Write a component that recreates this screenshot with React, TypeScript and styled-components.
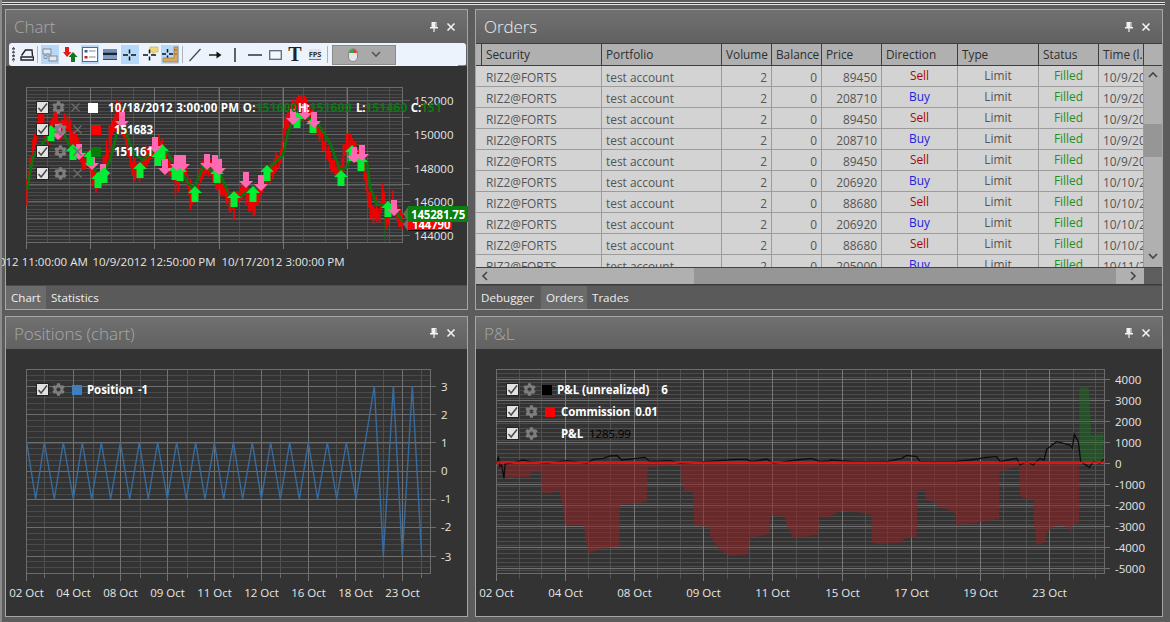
import React from "react";
import styled, { createGlobalStyle } from "styled-components";
import { FaCog } from "react-icons/fa";

const UI = '"Open Sans", "Noto Sans", sans-serif';

const Global = createGlobalStyle`
  html, body { margin: 0; padding: 0; background: #5c5c5c; overflow: hidden; }
  * { box-sizing: border-box; }
`;

const Win = styled.div`
  width: 1170px; height: 622px; overflow: hidden; background: #5c5c5c;
  padding: 2px 5px 0 0; font-family: ${UI}; display: flex; flex-direction: column;
  border-left: 2px solid #8c8c8c;
`;
const TopRule = styled.div`
  height: 3px; margin: 0 0 4px 0; flex: none;
  border-top: 1px solid #e4e4e4; border-bottom: 1px solid #e4e4e4; background: #3a3a3a;
`;
const PanelGrid = styled.div`
  display: grid; grid-template-columns: 463px 688px; grid-template-rows: 301px 301px;
  column-gap: 7px; row-gap: 6px; margin-left: 3px;
`;
const Panel = styled.section`
  border: 1px solid #a6a6a6; background: #333; display: flex; flex-direction: column; overflow: visible; min-width: 0;
`;
const Header = styled.header<{ $h: number }>`
  height: ${(p) => p.$h}px; flex: none; display: flex; align-items: center; justify-content: space-between;
  padding: 0 11px 0 8px; background: linear-gradient(#707070, #616161);
`;
const Title = styled.h2<{ $on?: boolean }>`
  margin: 0; font-size: 17px; font-weight: 300; line-height: 1; letter-spacing: -0.1px; color: ${(p) => (p.$on ? "#ececec" : "#a8a8a8")};
`;
const HeadIcons = styled.div`display: flex; align-items: center; gap: 7px;`;
const Body = styled.div`flex: 1; position: relative; min-height: 0; background: #333;`;
const TabBar = styled.nav`
  height: 24px; flex: none; display: flex; background: #5a5a5a; border-top: 1px solid #4a4a4a;
`;
const Tab = styled.div<{ $on?: boolean; $w: number }>`
  width: ${(p) => p.$w}px; display: flex; align-items: center; padding-left: 5px; font-size: 11.6px; color: #eee;
  background: ${(p) => (p.$on ? "#6b6b6b" : "transparent")};
`;

/* toolbar */
const ToolWrap = styled.div`height: 23px; flex: none; background: #616161; padding: 0 1px 0 3px;`;
const Toolbar = styled.div`
  height: 23px; background: #edf3fc; border-radius: 3px; display: flex; align-items: center; gap: 2px; padding-left: 3px; position: relative;
`;
const Grip = styled.div`
  width: 3px; height: 15px; margin-right: 1px;
  background: radial-gradient(circle at 1.5px 1.5px, #555 1.2px, transparent 1.4px) 0 0 / 3px 3.6px;
`;
const ToolBtn = styled.div<{ $on?: boolean; $w?: number }>`
  width: ${(p) => p.$w ?? 18}px; height: 19px; display: flex; align-items: center; justify-content: center;
  background: ${(p) => (p.$on ? "#b6d8f9" : "transparent")};
`;
const Sep = styled.div`width: 1px; height: 17px; background: #a9b4c2; margin: 0 1px 0 0;`;
const SepB = styled(Sep)`margin: 0 1px;`;
const SerifT = styled.span`font-family: "Liberation Serif", serif; font-weight: 700; font-size: 20px; line-height: 19px; color: #222;`;
const Fps = styled.span`font-size: 7.5px; font-weight: 700; color: #333; background: #dfe3e8; line-height: 10px; letter-spacing: -0.2px; border-bottom: 1px solid #777;`;
const MouseDrop = styled.div`
  width: 64px; height: 20px; margin-left: 1px; background: #a9a9a9; border: 1px solid #8a8a8a; display: flex; align-items: center; padding: 0 14px 0 15px; justify-content: space-between;
`;
const Overflow = styled.div`position: absolute; right: 0px; bottom: 1px; width: 9px; height: 9px;`;

/* legend */
const Legend = styled.div<{ $x: number; $y: number }>`
  position: absolute; left: ${(p) => p.$x}px; top: ${(p) => p.$y}px; display: flex; flex-direction: column; gap: 9px;
`;
const LegendRow = styled.div`display: flex; align-items: center; height: 13px; white-space: nowrap;`;
const Check = styled.span`
  width: 13px; height: 13px; background: #e2e2e2; border: 1px solid #222; display: flex; align-items: center; justify-content: center; flex: none;
`;
const Gear = styled.span<{ $ml: number }>`
  margin-left: ${(p) => p.$ml}px; width: 13px; height: 13px; color: #7e7e7e; display: flex; flex: none;
`;
const Cross = styled.span<{ $ml: number }>`margin-left: ${(p) => p.$ml}px; width: 11px; height: 11px; display: flex; flex: none;`;
const Swatch = styled.span<{ $c: string; $ml: number }>`
  margin-left: ${(p) => p.$ml}px; width: 10px; height: 10px; background: ${(p) => p.$c}; flex: none;
`;
const LName = styled.span<{ $ml: number }>`
  margin-left: ${(p) => p.$ml}px; font-size: 11.5px; font-weight: 700; color: #fff; letter-spacing: -0.1px;
`;
const DateName = styled(LName)`letter-spacing: 0.28px;`;
const LVal = styled.span<{ $c?: string; $ml?: number }>`
  margin-left: ${(p) => p.$ml ?? 0}px; font-size: 11.5px; font-weight: ${(p) => (p.$c === "#000" ? 400 : 700)}; color: ${(p) => p.$c ?? "#fff"}; letter-spacing: -0.1px;
`;
const BarVal = styled(LVal)`letter-spacing: 0.45px;`;

/* svg */
const ChartSvg = styled.svg`display: block; overflow: visible; position: relative;`;
const ChevSvg = styled.svg`position: relative; display: block;`;
const AxisText = styled.text`font-family: ${UI}; font-size: 11.5px; fill: #e6e6e6;`;
const PriceTag = styled.text`font-family: ${UI}; font-size: 11.5px; font-weight: 700; fill: #fff; letter-spacing: -0.2px;`;

/* orders grid */
const GridFrame = styled.div`flex: 1; min-height: 0; display: flex; flex-direction: column; background: #d3d3d3; border-bottom: 1px solid #3c3c3c;`;
const GridTop = styled.div`flex: 1; min-height: 0; display: flex;`;
const GridMain = styled.div`width: 668px; display: flex; flex-direction: column; min-height: 0;`;
const HeadRow = styled.div`height: 23px; flex: none; display: flex; background: #b0b0b0; border-top: 1px solid #3e3e3e; border-bottom: 1px solid #3e3e3e;`;
const HeadCell = styled.div<{ $w: number }>`
  width: ${(p) => p.$w}px; flex: none; border-right: 1px solid #3e3e3e; padding-left: 4px; font-size: 11.8px; color: #2e2e2e;
  line-height: 21px; overflow: hidden; white-space: nowrap;
`;
const Rows = styled.div`flex: 1; min-height: 0; overflow: hidden;`;
const Row = styled.div`height: 21px; display: flex; border-bottom: 1px solid #9c9c9c;`;
const Cell = styled.div<{ $w: number; $align?: string; $up?: boolean; $c?: string }>`
  width: ${(p) => p.$w}px; flex: none; border-right: 1px solid #9c9c9c; font-size: 11.9px; padding: 0 4px;
  line-height: ${(p) => (p.$up ? 18 : 22)}px; text-align: ${(p) => p.$align ?? "left"}; color: ${(p) => p.$c ?? "#555"};
  overflow: hidden; white-space: nowrap;
`;
const Stub = styled.div`width: 6px; flex: none;`;
const HStub = styled.div`width: 6px; flex: none; border-right: 1px solid #3e3e3e;`;
const VBar = styled.div`width: 18px; flex: none; display: flex; flex-direction: column; background: #b0b0b0; border-top: 1px solid #3e3e3e;`;
const VHead = styled.div`height: 22px; flex: none; border-bottom: 1px solid #3e3e3e;`;
const VTrack = styled.div`flex: 1; position: relative; display: flex; flex-direction: column; justify-content: space-between; align-items: center; padding: 5px 0;`;
const VThumb = styled.div`position: absolute; left: 0; right: 0; top: 58px; height: 33px; background: #969696;`;
const HBar = styled.div`height: 17px; flex: none; display: flex; background: #5e5e5e; border-top: 1px solid #444;`;
const HTrack = styled.div`width: 668px; position: relative; background: #b0b0b0; display: flex; align-items: center; justify-content: space-between; padding: 0 5px;`;
const HThumb = styled.div`position: absolute; left: 218px; width: 422px; top: 0; bottom: 0; background: #969696;`;

/* icons */
const Pin = () => (
  <svg width="10" height="12" viewBox="0 0 10 12"><path d="M2.5 1h5v5h1.5v1.5H5.6V11H4.4V7.5H1V6h1.5z" fill="#f2f2f2" /><path d="M6 1.8h.7v4H6z" fill="#999" /></svg>
);
const Close = () => (
  <svg width="10" height="10" viewBox="0 0 10 10"><path d="M1.5 1.5l7 7M8.5 1.5l-7 7" stroke="#f2f2f2" strokeWidth="1.6" /></svg>
);
const Tick = () => (
  <svg width="11" height="11" viewBox="0 0 11 11"><path d="M1.5 6l2.6 3L10 1.5" fill="none" stroke="#4a4a4a" strokeWidth="1.5" /></svg>
);
const CrossIcon = () => (
  <svg width="11" height="11" viewBox="0 0 11 11"><path d="M1.5 1.5l8 8M9.5 1.5l-8 8" stroke="#6e6e6e" strokeWidth="1.2" /></svg>
);
const Cross16 = ({ extra }: { extra?: React.ReactNode }) => (
  <svg width="18" height="17" viewBox="0 0 18 17">
    {extra}
    <path d="M2 9h5M10 9h5M8.5 3.5v4M8.5 10.5v4" stroke="#111" strokeWidth="1.5" />
  </svg>
);
const IconTray = () => (
  <svg width="14" height="13" viewBox="0 0 14 13"><path d="M1.5 7.5L5.5 2h6.5l.5 6M1 9h12.5v3H1z" fill="none" stroke="#222" strokeWidth="1.4" /></svg>
);
const IconChart = () => (
  <svg width="16" height="14" viewBox="0 0 16 14"><rect x="1" y="1" width="8" height="5" fill="#e4e9ef" stroke="#7c8a99" /><rect x="7" y="8" width="8" height="5" fill="#e4e9ef" stroke="#7c8a99" /><path d="M5 6l5 2M2 7.5h3v3H2z" fill="none" stroke="#8b98a6" /></svg>
);
const IconArrows = () => (
  <svg width="15" height="16" viewBox="0 0 15 16"><path d="M2 0h4v5h2.5L4 10 0 5h2z" fill="#e01b1b" /><path d="M10 5l4.5 5H12v5H8v-5H5.5z" fill="#0e7a1c" /></svg>
);
const IconLegend = () => (
  <svg width="16" height="15" viewBox="0 0 16 15"><rect x=".5" y=".5" width="15" height="14" fill="#fff" stroke="#5c6a78" /><rect x="2.5" y="3" width="3" height="2.5" fill="#2d62a8" /><path d="M7 4h6.5" stroke="#7a8796" /><rect x="2.5" y="9" width="3" height="2.5" fill="#c42020" /><path d="M7 10h6.5" stroke="#7a8796" /></svg>
);
const IconBand = () => (
  <svg width="14" height="12" viewBox="0 0 14 12"><rect x="0" y="0" width="14" height="3.5" fill="#6a8fb8" /><rect x="0" y="3.5" width="14" height="3" fill="#1b2230" /><rect x="0" y="6.5" width="14" height="3.5" fill="#7e9ec4" /><rect y="10" width="14" height="1" fill="#33445a" /></svg>
);
const IconCorner = () => (
  <svg width="18" height="17" viewBox="0 0 18 17">
    <path d="M13 1h4v15H2v-4h11z" fill="#d9a860" stroke="#8d6a30" strokeWidth=".6" />
    <path d="M1 8h4M8 8h4M6.5 3v3.5M6.5 9.5v2" stroke="#111" strokeWidth="1.5" />
    <path d="M13 4h3M13 8h3" stroke="#8d6a30" />
  </svg>
);
const IconLine = () => (
  <svg width="14" height="14" viewBox="0 0 14 14"><path d="M1.5 13L12.5 1" stroke="#444" strokeWidth="1.2" /></svg>
);
const IconArrow = () => (
  <svg width="13" height="8" viewBox="0 0 13 8"><path d="M0 4h8" stroke="#111" strokeWidth="1.4" /><path d="M7.5 .5L12.5 4l-5 3.5z" fill="#111" /></svg>
);
const IconV = () => <svg width="2" height="14" viewBox="0 0 2 14"><path d="M1 0v14" stroke="#222" strokeWidth="1.4" /></svg>;
const IconH = () => <svg width="14" height="2" viewBox="0 0 14 2"><path d="M0 1h14" stroke="#222" strokeWidth="1.4" /></svg>;
const IconRect = () => <svg width="13" height="10" viewBox="0 0 13 10"><rect x=".7" y=".7" width="11.6" height="8.6" fill="#f4f7fb" stroke="#5a6a7c" strokeWidth="1.3" /></svg>;
const IconMouse = () => (
  <svg width="10" height="14" viewBox="0 0 10 14"><rect x=".5" y=".5" width="9" height="13" rx="4.5" fill="#e6e6e6" stroke="#8a8a8a" /><path d="M1 5a4 4 0 0 1 4-4v4z" fill="#3aa35a" /><path d="M9 5a4 4 0 0 0-4-4v4z" fill="#d8433a" /></svg>
);
const Chev = ({ d, c = "#444" }: { d: "up" | "down" | "left" | "right"; c?: string }) => {
  const p = { up: "M1 6l4-4 4 4", down: "M1 2l4 4 4-4", left: "M6 1L2 5l4 4", right: "M2 1l4 4-4 4" }[d];
  return <ChevSvg width="10" height="10" viewBox="0 0 10 10"><path d={p} fill="none" stroke={c} strokeWidth="1.6" /></ChevSvg>;
};

/* data helpers */
const range = (a: number, b: number, step: number) => {
  const r: number[] = [];
  for (let v = a; v <= b + 0.001; v += step) r.push(v);
  return r;
};
const poly = (pts: number[][]) => pts.map((p) => `${p[0]},${p[1]}`).join(" ");
const interp = (pts: number[][], x: number) => {
  for (let i = 1; i < pts.length; i++) {
    if (x <= pts[i][0]) {
      const [x0, y0] = pts[i - 1];
      const [x1, y1] = pts[i];
      return y0 + ((y1 - y0) * (x - x0)) / (x1 - x0);
    }
  }
  return pts[pts.length - 1][1];
};

const priceRed = [[27,190],[30,165],[33,150],[36,135],[40,116],[44,125],[48,140],[52,122],[56,118],[60,130],[64,128],[68,125],[72,140],[76,135],[80,150],[84,166],[88,155],[92,170],[96,185],[100,178],[104,165],[108,150],[112,130],[116,118],[120,112],[124,130],[128,150],[132,165],[136,170],[140,172],[144,160],[150,150],[156,148],[162,145],[166,160],[170,170],[175,180],[180,175],[186,172],[190,190],[195,200],[200,175],[204,165],[208,165],[212,170],[218,185],[225,190],[230,205],[236,200],[242,190],[248,197],[254,205],[260,190],[265,180],[270,172],[276,162],[280,157],[285,123],[292,110],[300,102],[310,115],[320,133],[323,143],[333,167],[340,173],[347,140],[355,150],[363,160],[368,193],[373,213],[380,213],[383,193],[387,223],[393,200],[400,220],[403,224]];
const priceSma = [[27,190],[33,157],[50,133],[63,133],[72,150],[87,153],[100,180],[110,160],[117,133],[123,123],[133,153],[143,160],[157,147],[167,153],[180,170],[193,190],[203,167],[220,173],[230,197],[240,197],[250,190],[263,183],[270,167],[283,155],[288,133],[293,120],[303,113],[320,127],[330,143],[340,170],[347,167],[353,153],[367,162],[370,187],[377,205],[387,205],[397,213],[403,222]];
let seed = 12345;
const rnd = () => { seed = (seed * 1103515245 + 12345) & 0x7fffffff; return seed / 0x7fffffff; };
const candles = range(27, 403, 1.5).map((x) => {
  const c = interp(priceRed, x) + (rnd() - 0.5) * 6;
  const up = 3 + rnd() * 7;
  const down = 3 + rnd() * 8;
  return { x, a: c - up, b: c + down, wick: rnd() > 0.93 ? 7 : 0 };
});
const upArrows = [[51,133],[73,152],[90,158],[98,180],[104,175],[140,170],[158,158],[162,152],[175,172],[180,173],[195,194],[217,175],[234,199],[253,194],[267,173],[297,120],[313,125],[341,178],[352,153],[361,163],[388,209]];
const downArrows = [[58,132],[79,152],[92,162],[103,172],[122,120],[155,145],[165,167],[177,163],[183,163],[207,162],[215,163],[219,167],[246,180],[261,183],[293,117],[305,112],[314,120],[354,155],[362,153],[394,208]];
const upPts = (x: number, y: number) => `${x},${y-8} ${x+7},${y-1} ${x+3.5},${y-1} ${x+3.5},${y+8} ${x-3.5},${y+8} ${x-3.5},${y-1} ${x-7},${y-1}`;
const downPts = (x: number, y: number) => `${x},${y+8} ${x+7},${y+1} ${x+3},${y+1} ${x+3},${y-8} ${x-3},${y-8} ${x-3},${y+1} ${x-7},${y+1}`;

const PriceChart = () => {
  const major = [26.5, 90.5, 154.5, 219.5, 283.5, 347.5];
  const minor = range(26.5, 402, 21.33);
  const h200 = range(87, 242, 3.38);
  const h1000 = [100.5,117.5,134.5,151,168,184.5,201.5,218.5,235.5];
  return (
    <ChartSvg width="461" height="219" viewBox="6 66 461 219">
      {h200.map((y) => <line key={y} x1={26.5} x2={402.5} y1={Math.round(y)+.5} y2={Math.round(y)+.5} stroke="#4b4b4b" shapeRendering="crispEdges" />)}
      {minor.map((x) => <line key={x} x1={x} x2={x} y1={87} y2={242} stroke="#4f4f4f" shapeRendering="crispEdges" />)}
      {h1000.map((y) => <line key={y} x1={26.5} x2={410} y1={y} y2={y} stroke="#646464" shapeRendering="crispEdges" />)}
      {major.map((x) => <line key={x} x1={x} x2={x} y1={87} y2={249} stroke="#747474" shapeRendering="crispEdges" />)}
      <rect x="26.5" y="87.5" width="376" height="155" fill="none" stroke="#6c6c6c" shapeRendering="crispEdges" />
      {candles.map((c) => <line key={c.x} x1={c.x} x2={c.x} y1={c.a - c.wick} y2={c.b + c.wick} stroke="#f50000" strokeWidth="1.7" />)}
      <polyline points={poly(priceSma)} fill="none" stroke="#0a740f" strokeWidth="2.6" />
      <line x1="385" x2="385" y1="205" y2="242" stroke="#0a740f" />
      {downArrows.slice(0, 4).map(([x, y]) => <polygon key={x} points={downPts(x, y)} fill="#ff69b4" />)}
      {upArrows.map(([x, y]) => <polygon key={x} points={upPts(x, y)} fill="#00ee33" />)}
      {downArrows.slice(4).map(([x, y]) => <polygon key={x} points={downPts(x, y)} fill="#ff69b4" />)}
      {[[152000,100.5],[150000,134.5],[148000,168],[146000,201.5],[144000,235.5]].map(([v, y]) => <AxisText key={v} x="414" y={y + 4.5}>{v}</AxisText>)}
      <AxisText x="26" y="266" textAnchor="middle">10/1/2012 11:00:00 AM</AxisText>
      <AxisText x="154" y="266" textAnchor="middle">10/9/2012 12:50:00 PM</AxisText>
      <AxisText x="283" y="266" textAnchor="middle">10/17/2012 3:00:00 PM</AxisText>
      <polygon points="403,224 408,218 408,231" fill="#6a6a6a" />
      <rect x="408" y="218" width="44" height="12" fill="#ff0000" />
      <line x1="408" x2="452" y1="230.5" y2="230.5" stroke="#111" />
      <PriceTag x="412" y="228.5">144790</PriceTag>
      <polygon points="403,214 408,207 408,221" fill="#4e7a4e" />
      <rect x="408" y="206" width="60" height="16" fill="#0a8010" />
      <PriceTag x="411" y="218.5">145281.75</PriceTag>
    </ChartSvg>
  );
};

const zig = (() => {
  const peaks = [80,133,190,247,304,361,418,473,530,587,643,700,757,812,869,925,982,1039];
  const troughs = [107,163,220,275,332,389,445,502,559,615,671,728,784,841,898,953,1010,1068];
  const pts: number[][] = [];
  peaks.forEach((p, i) => { pts.push([p / 3, 442.5]); pts.push([troughs[i] / 3, 499]); });
  [[1123,386],[1150,556],[1180,386],[1207,556],[1237,386],[1265,556]].forEach(([x, y]) => pts.push([x / 3, y]));
  return pts;
})();

const PositionsChart = () => {
  const ys = [386.5,414.5,442.5,471,499,527,556.5];
  const vals = [3,2,1,0,-1,-2,-3];
  const major = [26.5,73.5,120.5,167.5,214.5,261.5,308.5,355.5,402.5];
  const minor = [44.5,93.5,140.5,187,233.5,280.5,336.5,383.5,421.5];
  const labels = ["02 Oct","04 Oct","08 Oct","09 Oct","11 Oct","12 Oct","16 Oct","18 Oct","23 Oct"];
  const fine = range(369, 573, 5.66);
  return (
    <ChartSvg width="461" height="267" viewBox="6 349 461 267">
      {fine.map((y) => <line key={y} x1={26.5} x2={430.5} y1={Math.round(y)+.5} y2={Math.round(y)+.5} stroke="#4a4a4a" shapeRendering="crispEdges" />)}
      {minor.map((x) => <line key={x} x1={x} x2={x} y1={369} y2={573} stroke="#505050" shapeRendering="crispEdges" />)}
      {minor.map((x) => <line key={x} x1={x} x2={x} y1={573} y2={578} stroke="#6c6c6c" shapeRendering="crispEdges" />)}
      {major.map((x) => <line key={x} x1={x} x2={x} y1={369} y2={581} stroke="#727272" shapeRendering="crispEdges" />)}
      {ys.map((y) => <line key={y} x1={26.5} x2={436} y1={y} y2={y} stroke="#6e6e6e" shapeRendering="crispEdges" />)}
      <rect x="26.5" y="369.5" width="404" height="204" fill="none" stroke="#6c6c6c" shapeRendering="crispEdges" />
      <polyline points={poly(zig)} fill="none" stroke="#386c9e" strokeWidth="1.4" />
      {ys.map((y, i) => <AxisText key={y} x="441" y={y + 4}>{vals[i]}</AxisText>)}
      {labels.map((l, i) => <AxisText key={l} x={major[i]} y="597" textAnchor="middle">{l}</AxisText>)}
    </ChartSvg>
  );
};

const z7 = (pts: number[][]) => pts.map(([x, y]) => [x / 3 + 480, y / 3 + 360]);
const z8 = (pts: number[][]) => pts.map(([x, y]) => [x / 3 + 820, y / 3 + 360]);
const lossArea = [
  ...z7([[49,308],[75,355],[150,350],[155,335],[183,335],[185,398],[215,400],[237,390],[247,430],[255,495],[310,495],[325,580],[370,565],[418,560],[420,435],[500,425],[503,323],[575,315],[600,315],[603,348],[612,395],[638,397],[642,497],[688,500],[690,530],[720,570],[750,588],[805,583],[808,533],[868,523],[872,467],[915,470],[918,490],[940,535],[1015,525],[1017,472],[1050,470]]),
  ...z8([[60,452],[125,458],[153,465],[155,548],[175,552],[245,548],[255,533],[290,533],[293,392],[315,390],[318,422],[350,425],[352,443],[380,447],[405,460],[408,495],[470,488],[530,478],[537,478],[539,337],[570,325],[597,322],[600,405],[608,415],[640,418],[642,490],[650,555],[675,548],[680,515],[710,495],[740,500],[755,515],[760,490],[777,490],[778,308]]),
];
const gainArea = z8([[778,308],[778,82],[806,82],[814,225],[850,220],[850,300],[851,308]]);
const pnlLine = [
  ...z7([[50,310],[55,290],[60,320],[65,315],[72,355],[75,312],[100,308],[130,300],[150,305],[200,310],[260,302],[320,310],[340,298],[370,295],[390,288],[412,287],[425,300],[470,295],[495,292],[510,305],[570,302],[600,310],[770,298],[800,298],[815,305],[860,297],[880,310],[950,300],[995,295],[1020,305],[1050,303]]),
  ...z8([[30,300],[100,305],[200,305],[245,295],[260,286],[290,290],[300,305],[400,305],[450,300],[500,292],[530,290],[540,305],[590,295],[600,315],[620,305],[640,315],[660,295],[672,300],[680,268],[710,245],[750,255],[757,265],[763,222],[775,245],[782,305],[808,322],[820,305],[840,310],[850,298]]),
];

const PnlChart = () => {
  const major = [496.5,565.5,634.5,703.5,772.5,842.5,911.5,980.5,1049.5];
  const minor = [519.5,541.5,588.5,610.5,657.5,680.5,727.5,749.5,796.5,818.5,865.5,887.5,934.5,956.5,1003.5,1026.5,1073.5,1095.5];
  const dates = ["02 Oct","04 Oct","08 Oct","09 Oct","11 Oct","15 Oct","17 Oct","19 Oct","23 Oct"];
  const vals = [4000,3000,2000,1000,0,-1000,-2000,-3000,-4000,-5000];
  const y0 = 462.5;
  const fine = range(369, 573, 4.19);
  return (
    <ChartSvg width="686" height="267" viewBox="476 349 686 267">
      {fine.map((y) => <line key={y} x1={496.5} x2={1104.5} y1={Math.round(y)+.5} y2={Math.round(y)+.5} stroke="#4d4d4d" shapeRendering="crispEdges" />)}
      {minor.map((x) => <line key={x} x1={x} x2={x} y1={369} y2={579} stroke="#505050" shapeRendering="crispEdges" />)}
      {vals.map((v, i) => <line key={v} x1={496.5} x2={1110} y1={Math.round(y0 - 84 + i * 21) + .5} y2={Math.round(y0 - 84 + i * 21) + .5} stroke="#727272" shapeRendering="crispEdges" />)}
      {major.map((x) => <line key={x} x1={x} x2={x} y1={369} y2={581} stroke="#787878" shapeRendering="crispEdges" />)}
      <rect x="496.5" y="369.5" width="608" height="204" fill="none" stroke="#6c6c6c" shapeRendering="crispEdges" />
      <polygon points={poly(lossArea)} fill="#922020" fillOpacity="0.55" />
      <polygon points={poly(gainArea)} fill="#1e6e22" fillOpacity="0.5" />
      <polyline points={poly(pnlLine)} fill="none" stroke="#0c0c0c" strokeWidth="1.3" />
      <line x1="496.5" x2="1104.5" y1={y0} y2={y0} stroke="#d01616" strokeWidth="2" />
      {vals.map((v, i) => <AxisText key={v} x="1115" y={y0 - 84 + i * 21 + 5}>{v}</AxisText>)}
      {dates.map((l, i) => <AxisText key={l} x={major[i]} y="597" textAnchor="middle">{l}</AxisText>)}
    </ChartSvg>
  );
};

const cols = [120, 120, 50, 50, 60, 76, 81, 60, 45];
const heads = ["Security","Portfolio","Volume","Balance","Price","Direction","Type","Status","Time (l..."];
const orders: [string, string, string][] = [
  ["89450","Sell","10/9/2012"],["208710","Buy","10/9/2012"],["89450","Sell","10/9/2012"],["208710","Buy","10/9/2012"],["89450","Sell","10/9/2012"],
  ["206920","Buy","10/10/2012"],["88680","Sell","10/10/2012"],["206920","Buy","10/10/2012"],["88680","Sell","10/10/2012"],["205000","Buy","10/11/2012"],
];

const CheckBox = () => <Check><Tick /></Check>;
const GearIcon = () => <FaCog size={13} />;

const Head = ({ title, on, h = 33 }: { title: string; on?: boolean; h?: number }) => (
  <Header $h={h}>
    <Title $on={on}>{title}</Title>
    <HeadIcons><Pin /><Close /></HeadIcons>
  </Header>
);

export default function App() {
  return (
    <Win>
      <Global />
      <TopRule />
      <PanelGrid>
        <Panel>
          <Head title="Chart" />
          <ToolWrap>
            <Toolbar>
              <Grip />
              <ToolBtn $w={17}><IconTray /></ToolBtn>
              <Sep />
              <ToolBtn $on><IconChart /></ToolBtn>
              <ToolBtn><IconArrows /></ToolBtn>
              <ToolBtn $on><IconLegend /></ToolBtn>
              <ToolBtn><IconBand /></ToolBtn>
              <ToolBtn $on><Cross16 /></ToolBtn>
              <ToolBtn><Cross16 extra={<path d="M9 1h8v5h-3l-2 2V6H9z" fill="#f0d878" stroke="#c8a84c" strokeWidth=".6" />} /></ToolBtn>
              <ToolBtn $on><IconCorner /></ToolBtn>
              <SepB />
              <ToolBtn><IconLine /></ToolBtn>
              <ToolBtn><IconArrow /></ToolBtn>
              <ToolBtn><IconV /></ToolBtn>
              <ToolBtn><IconH /></ToolBtn>
              <ToolBtn><IconRect /></ToolBtn>
              <ToolBtn><SerifT>T</SerifT></ToolBtn>
              <ToolBtn><Fps>FPS</Fps></ToolBtn>
              <SepB />
              <MouseDrop><IconMouse /><Chev d="down" c="#555" /></MouseDrop>
              <Overflow>
                <svg width="9" height="9" viewBox="0 0 9 9"><path d="M1 2h7" stroke="#222" /><path d="M1 4h7L4.5 8z" fill="#222" /></svg>
              </Overflow>
            </Toolbar>
          </ToolWrap>
          <Body>
            <PriceChart />
            <Legend $x={30} $y={35}>
              <LegendRow>
                <CheckBox /><Gear $ml={3}><GearIcon /></Gear><Cross $ml={5}><CrossIcon /></Cross><Swatch $c="#fff" $ml={7} />
                <DateName $ml={10}>10/18/2012 3:00:00 PM O:</DateName><BarVal $c="#0c7a12">151600</BarVal>
                <LVal>H:</LVal><BarVal $c="#0c7a12">151600</BarVal><LVal $ml={4}>L:</LVal><BarVal $c="#0c7a12">151460</BarVal><LVal $ml={3}>C:</LVal><BarVal $c="#0c7a12">151</BarVal>
              </LegendRow>
              <LegendRow><CheckBox /><Gear $ml={5}><GearIcon /></Gear><Cross $ml={5}><CrossIcon /></Cross><Swatch $c="#ff0000" $ml={8} /><LName $ml={13}>151683</LName></LegendRow>
              <LegendRow><CheckBox /><Gear $ml={5}><GearIcon /></Gear><Cross $ml={5}><CrossIcon /></Cross><Swatch $c="#0a7a0a" $ml={8} /><LName $ml={13}>151161</LName></LegendRow>
              <LegendRow><CheckBox /><Gear $ml={5}><GearIcon /></Gear><Cross $ml={5}><CrossIcon /></Cross></LegendRow>
            </Legend>
          </Body>
          <TabBar><Tab $on $w={40}>Chart</Tab><Tab $w={60}>Statistics</Tab></TabBar>
        </Panel>

        <Panel>
          <Head title="Orders" on />
          <GridFrame>
            <GridTop>
              <GridMain>
                <HeadRow>
                  <HStub />
                  {heads.map((h, i) => <HeadCell key={h} $w={cols[i]}>{h}</HeadCell>)}
                </HeadRow>
                <Rows>
                  {orders.map(([price, dir, time], i) => (
                    <Row key={i}>
                      <Stub />
                      <Cell $w={cols[0]}>RIZ2@FORTS</Cell>
                      <Cell $w={cols[1]}>test account</Cell>
                      <Cell $w={cols[2]} $align="right">2</Cell>
                      <Cell $w={cols[3]} $align="right">0</Cell>
                      <Cell $w={cols[4]} $align="right">{price}</Cell>
                      <Cell $w={cols[5]} $align="center" $up $c={dir === "Sell" ? "#a80808" : "#2222d8"}>{dir}</Cell>
                      <Cell $w={cols[6]} $align="center" $up>Limit</Cell>
                      <Cell $w={cols[7]} $align="center" $up $c="#1f8f1f">Filled</Cell>
                      <Cell $w={cols[8]}>{time}</Cell>
                    </Row>
                  ))}
                </Rows>
              </GridMain>
              <VBar>
                <VHead />
                <VTrack>
                  <VThumb />
                  <Chev d="up" />
                  <Chev d="down" />
                </VTrack>
              </VBar>
            </GridTop>
            <HBar>
              <HTrack>
                <HThumb />
                <Chev d="left" />
                <Chev d="right" />
              </HTrack>
            </HBar>
          </GridFrame>
          <TabBar><Tab $w={65}>Debugger</Tab><Tab $on $w={46}>Orders</Tab><Tab $w={60}>Trades</Tab></TabBar>
        </Panel>

        <Panel>
          <Head title="Positions (chart)" h={32} />
          <Body>
            <PositionsChart />
            <Legend $x={30} $y={34}>
              <LegendRow><CheckBox /><Gear $ml={3}><GearIcon /></Gear><Swatch $c="#3f7fbd" $ml={7} /><LName $ml={5}>Position</LName><LVal $ml={5}>-1</LVal></LegendRow>
            </Legend>
          </Body>
        </Panel>

        <Panel>
          <Head title="P&L" h={32} />
          <Body>
            <PnlChart />
            <Legend $x={30} $y={34}>
              <LegendRow><CheckBox /><Gear $ml={4}><GearIcon /></Gear><Swatch $c="#000" $ml={6} /><LName $ml={5}>P&L (unrealized)</LName><LVal $ml={12}>6</LVal></LegendRow>
              <LegendRow><CheckBox /><Gear $ml={6}><GearIcon /></Gear><Swatch $c="#ff0000" $ml={7} /><LName $ml={6}>Commission</LName><LVal $ml={5}>0.01</LVal></LegendRow>
              <LegendRow><CheckBox /><Gear $ml={6}><GearIcon /></Gear><LName $ml={23}>P&L</LName><LVal $c="#000" $ml={6}>1285.99</LVal></LegendRow>
            </Legend>
          </Body>
        </Panel>
      </PanelGrid>
    </Win>
  );
}
